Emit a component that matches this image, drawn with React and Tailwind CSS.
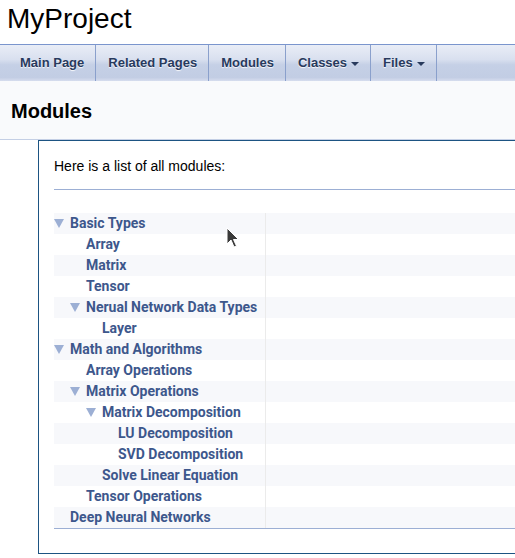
import React from "react";

const modules = [
  [0, true, "Basic Types"],
  [1, false, "Array"],
  [1, false, "Matrix"],
  [1, false, "Tensor"],
  [1, true, "Nerual Network Data Types"],
  [2, false, "Layer"],
  [0, true, "Math and Algorithms"],
  [1, false, "Array Operations"],
  [1, true, "Matrix Operations"],
  [2, true, "Matrix Decomposition"],
  [3, false, "LU Decomposition"],
  [3, false, "SVD Decomposition"],
  [2, false, "Solve Linear Equation"],
  [1, false, "Tensor Operations"],
  [0, false, "Deep Neural Networks"],
];

// indent per level, written out so tailwind picks them up
const indent = ["pl-0", "pl-4", "pl-8", "pl-12"];

const navItems = [
  { label: "Main Page" },
  { label: "Related Pages" },
  { label: "Modules" },
  { label: "Classes", menu: true },
  { label: "Files", menu: true },
];

function Arrow() {
  return (
    <svg width="10" height="9" viewBox="0 0 10 9" className="shrink-0">
      <polygon points="0,0 10,0 5,9" fill="#9CAFD4" />
    </svg>
  );
}

function Caret() {
  return (
    <svg width="8" height="4" viewBox="0 0 8 4" className="ml-[4px] mt-[2px]">
      <polygon points="0,0 8,0 4,4" fill="#283A5D" />
    </svg>
  );
}

function Cursor() {
  return (
    <svg width="14" height="22" viewBox="0 0 14 22" className="absolute left-[226px] top-[227px]">
      <path d="M1 1 L1 17 L5 13 L8 20 L10.5 19 L7.5 12.5 L12.5 12.5 Z" fill="#3a3a3a" stroke="#ffffff" strokeWidth="1" />
    </svg>
  );
}

export default function App() {
  return (
    <div className="relative w-[515px] h-[558px] overflow-hidden bg-white font-['Liberation_Sans',Arial,sans-serif]">
      {/* project title */}
      <div className="h-[44px] pl-[7px] pt-[1px] text-[28px] leading-[36px] text-black">MyProject</div>

      {/* nav bar */}
      <div className="flex h-[37px] border-t border-[#7A95CD] bg-[linear-gradient(#E9EDF6_0%,#D9E0EF_40%,#C5D0E6_55%,#C2CDE4_90%,#D6DDEE_100%)] pl-[8px]">
        {navItems.map((item) => (
          <div
            key={item.label}
            className="flex items-center border-r border-[#8AA0CC] pl-3 pr-[11px] text-[13px] font-bold text-[#283A5D] [text-shadow:0_1px_1px_rgba(255,255,255,0.9)]"
          >
            {item.label}
            {item.menu && <Caret />}
          </div>
        ))}
      </div>

      {/* page header */}
      <div className="h-[59px] border-b border-[#C4CFE5] bg-[#F9FAFC] pl-[11px] pt-[17px]">
        <div className="text-[20px] font-bold leading-[26px] text-black">Modules</div>
      </div>

      {/* contents */}
      <div className="ml-[38px] h-[414px] border-l border-t border-b border-[#1D5482] pl-[15px] pt-[16px]">
        <div className="text-[14px] leading-[18px] text-black">Here is a list of all modules:</div>
        <div className="mt-[14px] border-t border-[#9CAFD4]"></div>
        <div className="mt-[23px] border-b border-[#9CAFD4] font-['Roboto',sans-serif]">
          {modules.map(([level, open, name], i) => (
            <div key={name} className={"flex h-[21px] " + (i % 2 === 0 ? "bg-[#F7F8FB]" : "bg-white")}>
              <div className={"flex w-[212px] items-center border-r border-[#EBEBEB] " + indent[level]}>
                <div className="flex w-4 items-center">{open && <Arrow />}</div>
                <span className="text-[14px] font-bold leading-[21px] text-[#3D578C] whitespace-nowrap">{name}</span>
              </div>
              <div className="flex-1"></div>
            </div>
          ))}
        </div>
      </div>

      <Cursor />
    </div>
  );
}
